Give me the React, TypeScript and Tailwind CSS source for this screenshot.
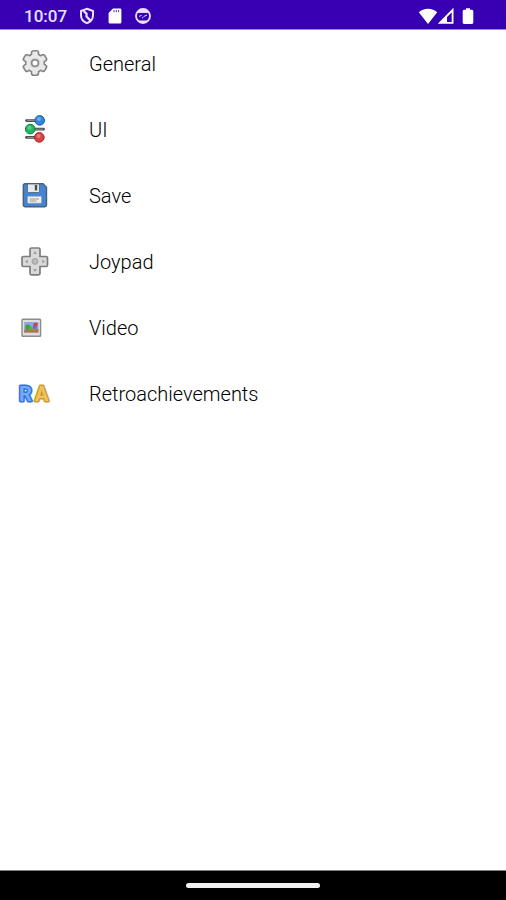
import React from "react";

function GearIcon() {
  const teeth = [0, 60, 120, 180, 240, 300];
  return (
    <svg viewBox="0 0 32 32" className="size-8" aria-hidden="true">
      <g fill="#858585">
        {teeth.map((a) => (
          <rect key={a} x="11.7" y="3" width="8.6" height="9" rx="2.8" transform={`rotate(${a} 16 16)`} />
        ))}
        <circle cx="16" cy="16" r="10.2" />
      </g>
      <g fill="#e9e9e9">
        {teeth.map((a) => (
          <rect key={a} x="13.3" y="4.6" width="5.4" height="8" rx="1.4" transform={`rotate(${a} 16 16)`} />
        ))}
        <circle cx="16" cy="16" r="8.6" />
      </g>
      <circle cx="16" cy="16" r="5.2" fill="#d6d6d6" />
      <circle cx="16" cy="16" r="3.3" fill="#fff" stroke="#858585" strokeWidth="1.6" />
    </svg>
  );
}

function SlidersIcon() {
  return (
    <svg viewBox="0 0 32 32" className="size-8" aria-hidden="true">
      <g stroke="#4c4c4c" strokeWidth="2.8" strokeLinecap="round">
        <path d="M7.5 7.6H24M8 16.2h16.5M7.5 24.4H24" />
      </g>
      <g stroke="#a0a0a0" strokeWidth="0.8">
        <path d="M8 7.6h8M16 16.2h8M8 24.4h8" />
      </g>
      <circle cx="20.7" cy="7.4" r="4.8" fill="#2f86dc" stroke="#235a9c" strokeWidth="1" />
      <circle cx="11.2" cy="16.1" r="4.8" fill="#1fb963" stroke="#13783f" strokeWidth="1" />
      <circle cx="20.3" cy="24.4" r="4.8" fill="#dc4340" stroke="#962524" strokeWidth="1" />
      <g fill="#fff" fillOpacity="0.3">
        <circle cx="20" cy="6" r="2" />
        <circle cx="10.5" cy="14.7" r="2" />
        <circle cx="19.6" cy="23" r="2" />
      </g>
    </svg>
  );
}

function FloppyIcon() {
  return (
    <svg viewBox="0 0 32 32" className="size-8" aria-hidden="true">
      <path
        d="M6 4.8h18l3.5 3.5V26a1.7 1.7 0 0 1-1.7 1.7H6A1.7 1.7 0 0 1 4.3 26V6.5A1.7 1.7 0 0 1 6 4.8z"
        fill="#4385d2"
        stroke="#4b6077"
        strokeWidth="1.4"
      />
      <path d="M8.5 5h12v7.5a1 1 0 0 1-1 1h-10a1 1 0 0 1-1-1z" fill="#e9e9e9" stroke="#4b6077" strokeWidth="0.8" />
      <rect x="15.8" y="6" width="2.4" height="5.4" fill="#4a4f57" />
      <rect x="8.5" y="17.2" width="14" height="7" rx="0.8" fill="#f3f0ec" stroke="#86a0bd" strokeWidth="0.7" />
      <path d="M10.5 20h9.5M10.5 22h7" stroke="#969696" strokeWidth="1.1" />
    </svg>
  );
}

function DpadIcon() {
  return (
    <svg viewBox="0 0 32 32" className="size-8" aria-hidden="true">
      <path
        d="M12.5 3h7a1.5 1.5 0 0 1 1.5 1.5v7h6A1.5 1.5 0 0 1 28.5 13v7a1.5 1.5 0 0 1-1.5 1.5h-6v6.8a1.5 1.5 0 0 1-1.5 1.5h-7a1.5 1.5 0 0 1-1.5-1.5v-6.8H4.5A1.5 1.5 0 0 1 3 20v-7a1.5 1.5 0 0 1 1.5-1.5H11v-7A1.5 1.5 0 0 1 12.5 3z"
        fill="#d9d9d9"
        stroke="#7d7d7d"
        strokeWidth="1.7"
      />
      <circle cx="16" cy="16.4" r="3" fill="#b8b8b8" stroke="#a2a2a2" strokeWidth="0.9" />
      <path
        d="M16 6l2 3h-4zM16 27l2-3h-4zM5.8 16.4l3-2v4zM26.2 16.4l-3-2v4z"
        fill="#a0a0a0"
      />
    </svg>
  );
}

function PictureIcon() {
  return (
    <svg viewBox="0 0 32 32" className="size-8" aria-hidden="true">
      <rect x="3" y="8.2" width="18.6" height="17" rx="0.8" fill="#dedede" stroke="#8c8c8c" strokeWidth="1.4" />
      <rect x="5.2" y="11" width="14.2" height="10.6" fill="#8fa4e2" />
      <path d="M5.2 18.8c4-1.6 9 .8 14.2-1v3.8H5.2z" fill="#b1763f" />
      <circle cx="8.8" cy="16" r="2.6" fill="#35a83d" />
      <circle cx="12" cy="17.2" r="1.8" fill="#52b63c" />
      <rect x="14" y="13.6" width="3.8" height="4.2" fill="#7d5fc0" />
      <rect x="14.8" y="12" width="3.8" height="2.6" fill="#c8443f" />
    </svg>
  );
}

function RetroIcon() {
  return (
    <svg viewBox="0 0 32 32" className="size-8 overflow-visible" aria-hidden="true">
      <g fontFamily="Roboto, sans-serif" fontSize="20" fontWeight="700" strokeLinejoin="round">
        <g strokeWidth="3">
          <text x="0" y="24" fill="#2f74e2" stroke="#2f74e2">R</text>
          <text x="16" y="24" fill="#d09a2c" stroke="#d09a2c">A</text>
        </g>
        <text x="0" y="24" fill="#76a9f6">R</text>
        <text x="16" y="24" fill="#ecc45e">A</text>
      </g>
    </svg>
  );
}

const items = [
  { label: "General", Icon: GearIcon },
  { label: "UI", Icon: SlidersIcon },
  { label: "Save", Icon: FloppyIcon },
  { label: "Joypad", Icon: DpadIcon },
  { label: "Video", Icon: PictureIcon },
  { label: "Retroachievements", Icon: RetroIcon },
];

function StatusBar() {
  return (
    <header className="flex h-[30px] shrink-0 items-center justify-between border-b border-[#9a86d8] bg-[#3700b3] pt-0.5 pr-[30px] pl-6 text-[#e9e2fa]">
      <div className="flex items-center gap-3">
        <span className="text-[17px] leading-6 font-medium">10:07</span>
        <svg viewBox="0 0 16 18" className="h-[18px] w-4" fill="none" stroke="currentColor" aria-hidden="true">
          <path d="M8 1.8l6 2.2v4.2c0 3.7-2.4 6.5-6 8-3.6-1.5-6-4.3-6-8V4z" strokeWidth="2" />
          <path d="M4.5 4l3 2.6v3l4 4" strokeWidth="2.2" />
        </svg>
        <svg viewBox="0 0 16 18" className="h-[18px] w-4" aria-hidden="true">
          <path d="M6 1.4h7A1.4 1.4 0 0 1 14.4 2.8v12.4a1.4 1.4 0 0 1-1.4 1.4H3a1.4 1.4 0 0 1-1.4-1.4V6z" fill="#fff" />
          <path d="M7 3v2.2M9.3 3v2.2M11.6 3v2.2" stroke="#4d32ad" strokeWidth="1" />
        </svg>
        <svg viewBox="0 0 16 18" className="h-[18px] w-4" fill="none" stroke="currentColor" aria-hidden="true">
          <circle cx="8" cy="9" r="7" strokeWidth="1.8" />
          <path d="M2.5 5.4a6.6 6.6 0 0 1 11 0z" fill="currentColor" strokeWidth="1" />
          <path d="M4 9.4l2.6-1M9 9.4l3-1.4M7 11.2l1.6-1.4" strokeWidth="1" />
          <path d="M4.3 14h7.4a6 6 0 0 1-7.4 0z" fill="currentColor" strokeWidth="1" />
        </svg>
      </div>
      <div className="flex items-center gap-1.5 text-white">
        <div className="flex items-center">
          <svg viewBox="0 0 20 18" className="h-[18px] w-5" fill="currentColor" aria-hidden="true">
            <path d="M10 17L.8 5.2C3.2 3 6.4 1.8 10 1.8s6.8 1.2 9.2 3.4z" />
          </svg>
          <svg viewBox="0 0 16 18" className="h-[18px] w-4" aria-hidden="true">
            <path d="M14.6 3v12.8H2z" fill="none" stroke="currentColor" strokeWidth="1.8" />
            <path d="M9 9v6.8H2z" fill="currentColor" />
          </svg>
        </div>
        <svg viewBox="0 0 16 18" className="h-[18px] w-4" fill="currentColor" aria-hidden="true">
          <path d="M6 1.2h4v1.6h2a1.4 1.4 0 0 1 1.3 1.4v11.4a1.4 1.4 0 0 1-1.3 1.4H4a1.4 1.4 0 0 1-1.3-1.4V4.2A1.4 1.4 0 0 1 4 2.8h2z" />
        </svg>
      </div>
    </header>
  );
}

export default function App() {
  return (
    <div className="flex min-h-screen flex-col bg-white font-['Roboto',sans-serif]">
      <StatusBar />
      <main className="flex-1">
        <ul>
          {items.map(({ label, Icon }) => (
            <li key={label}>
              <button
                type="button"
                className="flex h-[66px] w-full items-center gap-[38px] px-[19px] text-left text-xl font-light text-black"
              >
                <Icon />
                <span className="pt-0.5">{label}</span>
              </button>
            </li>
          ))}
        </ul>
      </main>
      <footer className="flex h-[30px] shrink-0 items-center justify-center border-t border-[#808080] bg-black">
        <div className="h-[5px] w-[134px] rounded-full bg-[#f0f0f0]" />
      </footer>
    </div>
  );
}
